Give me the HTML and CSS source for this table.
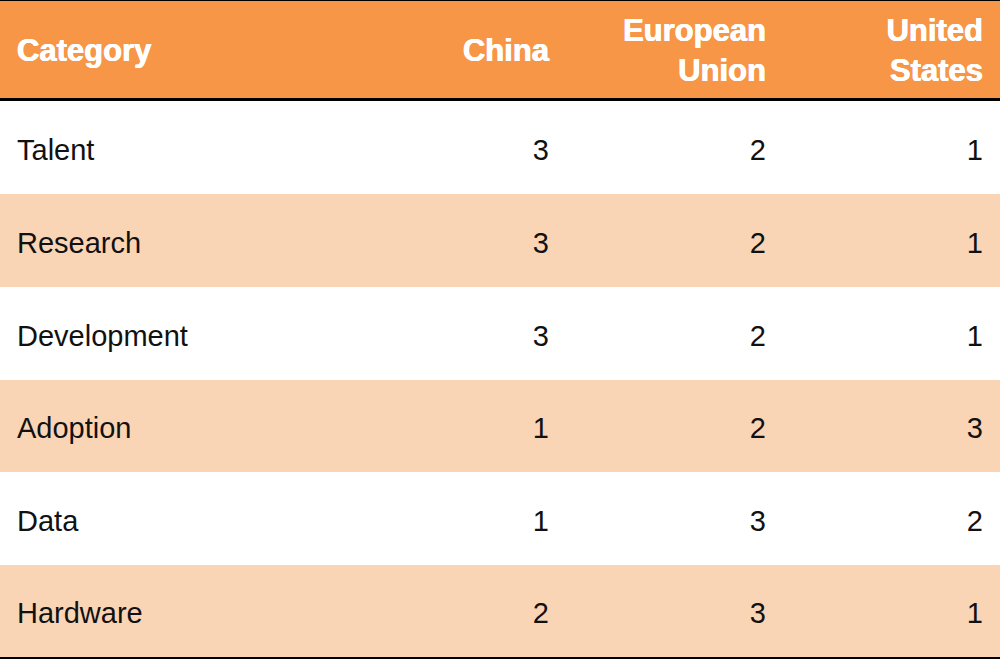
FILE: index.html
```html
<!DOCTYPE html>
<html>
<head>
<meta charset="utf-8">
<link rel="stylesheet" href="styles.css">
</head>
<body>
<div class="table">
  <div class="row head">
    <div class="cell first">Category</div>
    <div class="cell num">China</div>
    <div class="cell num">European<br>Union</div>
    <div class="cell num">United<br>States</div>
  </div>
  <div class="row r93">
    <div class="cell first">Talent</div>
    <div class="cell num">3</div>
    <div class="cell num">2</div>
    <div class="cell num">1</div>
  </div>
  <div class="row r93 alt">
    <div class="cell first">Research</div>
    <div class="cell num">3</div>
    <div class="cell num">2</div>
    <div class="cell num">1</div>
  </div>
  <div class="row r93">
    <div class="cell first">Development</div>
    <div class="cell num">3</div>
    <div class="cell num">2</div>
    <div class="cell num">1</div>
  </div>
  <div class="row r92 alt">
    <div class="cell first">Adoption</div>
    <div class="cell num">1</div>
    <div class="cell num">2</div>
    <div class="cell num">3</div>
  </div>
  <div class="row r93">
    <div class="cell first">Data</div>
    <div class="cell num">1</div>
    <div class="cell num">3</div>
    <div class="cell num">2</div>
  </div>
  <div class="row r92 alt last">
    <div class="cell first">Hardware</div>
    <div class="cell num">2</div>
    <div class="cell num">3</div>
    <div class="cell num">1</div>
  </div>
</div>
</body>
</html>
```

FILE: styles.css
```css
html, body {
  margin: 0;
  padding: 0;
  background: #ffffff;
}

.table {
  width: 1000px;
  font-family: "Liberation Sans", Arial, sans-serif;
  color: #111111;
}

.row {
  display: grid;
  grid-template-columns: 349px 217px 217px 217px;
  box-sizing: border-box;
}

.cell {
  display: flex;
  align-items: center;
  padding: 5px 17px 0 17px;
}

.num {
  justify-content: flex-end;
  text-align: right;
}

.head {
  background: #f79646;
  border-top: 1px solid #000000;
  border-bottom: 3px solid #000000;
  height: 101px;
  color: #ffffff;
  font-weight: bold;
  font-size: 31px;
  line-height: 40px;
  text-shadow: 0.4px 0 0 #ffffff, -0.4px 0 0 #ffffff;
}

.head .cell {
  padding-top: 2px;
}

.r93 {
  height: 93px;
  font-size: 29px;
}

.r92 {
  height: 92px;
  font-size: 29px;
}

.alt {
  background: #fad5b5;
}

.last {
  height: 94px;
  border-bottom: 2px solid #000000;
}
```
